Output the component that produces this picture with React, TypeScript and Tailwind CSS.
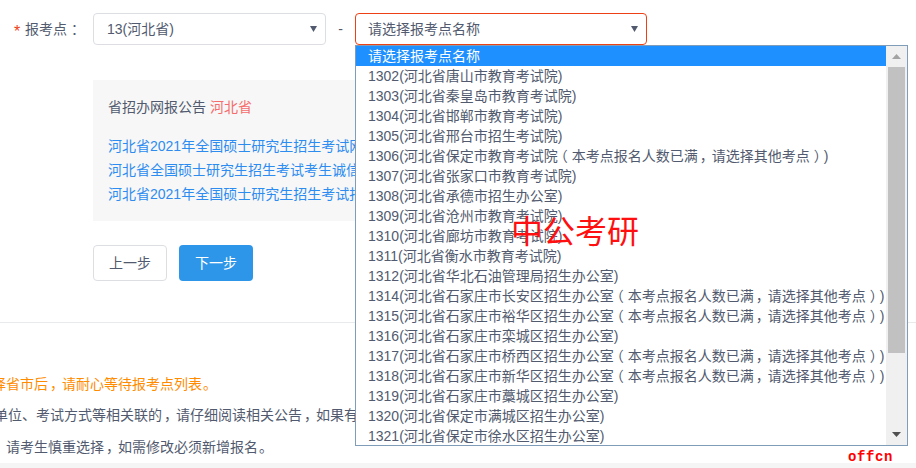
const full = "（本考点报名人数已满，请选择其他考点）";

const items = [
  "1302(河北省唐山市教育考试院)",
  "1303(河北省秦皇岛市教育考试院)",
  "1304(河北省邯郸市教育考试院)",
  "1305(河北省邢台市招生考试院)",
  `1306(河北省保定市教育考试院${full})`,
  "1307(河北省张家口市教育考试院)",
  "1308(河北省承德市招生办公室)",
  "1309(河北省沧州市教育考试院)",
  "1310(河北省廊坊市教育考试院)",
  "1311(河北省衡水市教育考试院)",
  "1312(河北省华北石油管理局招生办公室)",
  `1314(河北省石家庄市长安区招生办公室${full})`,
  `1315(河北省石家庄市裕华区招生办公室${full})`,
  "1316(河北省石家庄市栾城区招生办公室)",
  `1317(河北省石家庄市桥西区招生办公室${full})`,
  `1318(河北省石家庄市新华区招生办公室${full})`,
  "1319(河北省石家庄市藁城区招生办公室)",
  "1320(河北省保定市满城区招生办公室)",
  "1321(河北省保定市徐水区招生办公室)",
];

const notices = [
  "河北省2021年全国硕士研究生招生考试网上报名公告",
  "河北省全国硕士研究生招生考试考生诚信考试承诺书",
  "河北省2021年全国硕士研究生招生考试报考点信息",
];

// the picture's font sits full-width punctuation in the middle of its cell
function Cn({ text }: { text: string }) {
  return (
    <>
      {text.split(/([，。（）：])/).map((part, i) => {
        if (part === "（")
          return <span key={i} className="inline-block w-[14px] indent-[-4px] whitespace-nowrap">{part}</span>;
        if (part === "）" || part === "：")
          return <span key={i} className="inline-block w-[14px] indent-[4px] whitespace-nowrap">{part}</span>;
        if (part === "，")
          return <span key={i} className="inline-block w-[14px] indent-[2px] whitespace-nowrap">{part}</span>;
        if (part === "。")
          return <span key={i} className="inline-block w-[14px] indent-[1px] whitespace-nowrap">{part}</span>;
        return <span key={i}>{part}</span>;
      })}
    </>
  );
}

function Caret() {
  return (
    <svg width="7" height="6" viewBox="0 0 7 6" className="absolute right-[8px] top-[12px]">
      <path d="M0 0h7L3.500 6z" fill="#515a6e" />
    </svg>
  );
}

export default function App() {
  return (
    <div className="relative w-[916px] h-[468px] overflow-hidden bg-white text-[14px] text-[#515a6e] font-['Liberation_Sans','Noto_Sans_CJK_SC',sans-serif]">
      {/* form row */}
      <div className="flex items-center pt-[13px] h-[45px]">
        <div className="w-[93px] flex items-center pl-[14px] text-[#515a6e]">
          <span className="text-[#ed4014] w-[11px] text-[16px] leading-[16px] pt-[6px]">*</span>
          <span>
            <Cn text="报考点：" />
          </span>
        </div>
        <div className="relative w-[233px] h-[32px] border border-[#dcdee2] rounded-[4px] pl-[13px] leading-[30px]">
          13(河北省)
          <Caret />
        </div>
        <div className="w-[29px] text-center">-</div>
        <div className="relative w-[292px] h-[32px] border border-[#ed4014] rounded-[4px] pl-[12px] leading-[30px]">
          请选择报考点名称
          <Caret />
        </div>
      </div>

      {/* notice box */}
      <div className="ml-[93px] mt-[35px] w-[300px] h-[141px] bg-[#f7f7f7] pl-[15px] pt-[17px] overflow-hidden whitespace-nowrap">
        <div className="leading-[20px]">
          省招办网报公告 <span className="text-[#f56c6c]">河北省</span>
        </div>
        <div className="mt-[17px] flex flex-col text-[#2d8cf0] leading-[24px]">
          {notices.map((n) => (
            <div key={n}>{n}</div>
          ))}
        </div>
      </div>

      {/* buttons */}
      <div className="ml-[93px] mt-[24px] flex gap-[12px]">
        <div className="w-[74px] h-[36px] border border-[#dcdee2] rounded-[4px] flex items-center justify-center">上一步</div>
        <div className="w-[74px] h-[36px] bg-[#2d96e8] text-white rounded-[4px] flex items-center justify-center">下一步</div>
      </div>

      <div className="mt-[41px] border-t border-[#e8eaec]" />

      {/* tips, cut off on the left like the page in the picture */}
      <div className="mt-[51px] whitespace-nowrap">
        <div className="ml-[-8px] text-[#ff8c00] leading-[20px]">
          <Cn text="择省市后，请耐心等待报考点列表。" />
        </div>
        <div className="ml-[-6px] mt-[11px] leading-[20px]">
          <Cn text="单位、考试方式等相关联的，请仔细阅读相关公告，如果有" />
        </div>
        <div className="ml-[6px] mt-[12px] leading-[20px]">
          <Cn text="请考生慎重选择，如需修改必须新增报名。" />
        </div>
      </div>

      <div className="absolute left-0 right-0 bottom-0 h-[5px] bg-[#f5f5f5]" />

      {/* open select list */}
      <div className="absolute left-[355px] top-[45px] w-[553px] h-[401px] border border-[#7f9db9] bg-white flex">
        <div className="flex-1 min-w-0 whitespace-nowrap overflow-hidden leading-[20px]">
          <div className="h-[20px] bg-[#1e90ff] text-white pl-[12px]">请选择报考点名称</div>
          {items.map((t) => (
            <div key={t} className="h-[20px] pl-[12px]">
              <Cn text={t} />
            </div>
          ))}
        </div>
        <div className="w-[21px] bg-[#f0f0f0] flex flex-col items-center">
          <div className="h-[21px] flex items-center justify-center">
            <svg width="9" height="5" viewBox="0 0 9 5"><path d="M4.500 0L9 5H0z" fill="#a3a3a3" /></svg>
          </div>
          <div className="w-[17px] h-[286px] bg-[#c1c1c1]" />
          <div className="flex-1" />
          <div className="h-[21px] flex items-center justify-center">
            <svg width="9" height="5" viewBox="0 0 9 5"><path d="M0 0h9L4.500 5z" fill="#505050" /></svg>
          </div>
        </div>
      </div>

      {/* watermarks */}
      <div className="absolute left-[511px] top-[210px] text-[32px] leading-[38px] text-[#ff1010] font-['Noto_Sans_CJK_SC',sans-serif]">中公考研</div>
      <div className="absolute left-[848px] top-[449px] text-[14px] leading-[16px] font-bold text-[#ff0000] tracking-[0.6px] font-['Liberation_Mono',monospace]">offcn</div>
    </div>
  );
}
